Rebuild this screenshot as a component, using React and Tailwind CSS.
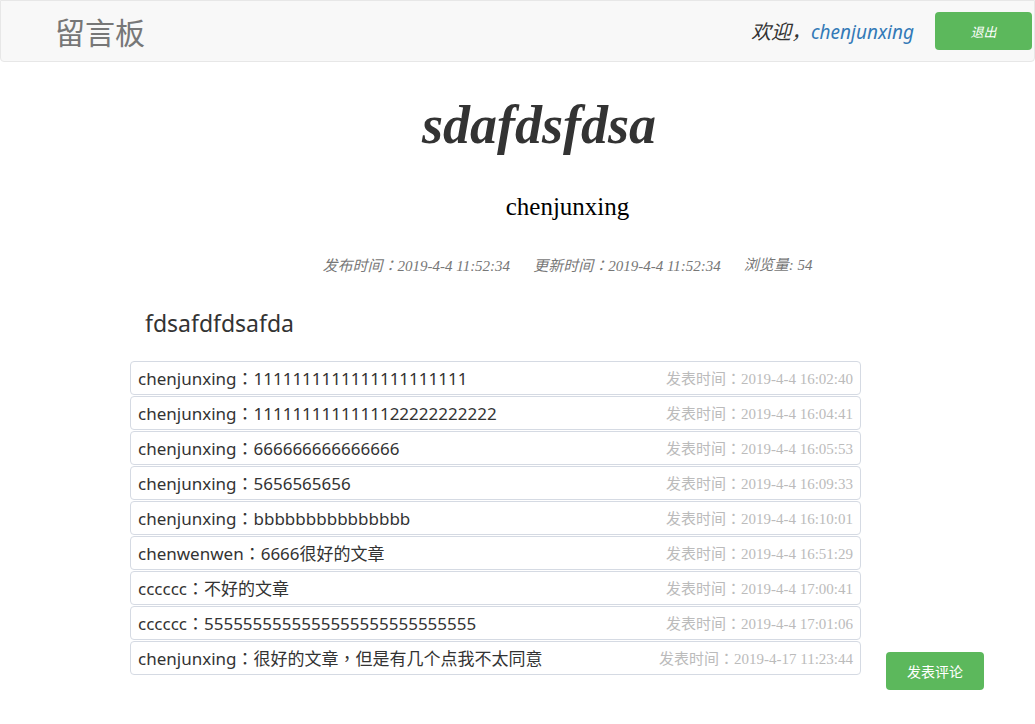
import React from "react";

const comments = [
  { user: "chenjunxing", text: "1111111111111111111111", time: "2019-4-4 16:02:40" },
  { user: "chenjunxing", text: "1111111111111122222222222", time: "2019-4-4 16:04:41" },
  { user: "chenjunxing", text: "666666666666666", time: "2019-4-4 16:05:53" },
  { user: "chenjunxing", text: "5656565656", time: "2019-4-4 16:09:33" },
  { user: "chenjunxing", text: "bbbbbbbbbbbbbbb", time: "2019-4-4 16:10:01" },
  { user: "chenwenwen", text: "6666很好的文章", time: "2019-4-4 16:51:29" },
  { user: "cccccc", text: "不好的文章", time: "2019-4-4 17:00:41" },
  { user: "cccccc", text: "5555555555555555555555555555", time: "2019-4-4 17:01:06" },
  { user: "chenjunxing", text: "很好的文章，但是有几个点我不太同意", time: "2019-4-17 11:23:44" },
];

const sans = "font-['Noto_Sans','Noto_Sans_CJK_SC',sans-serif]";
const serif = "font-['Liberation_Serif','Noto_Sans_CJK_SC',serif]";

// centered full-width colon, like the original's font
function Colon() {
  return <span className="font-['Noto_Sans_CJK_JP',sans-serif]">：</span>;
}

// full-width commas sit centered in the original too
function withCommas(text) {
  return text.split("，").map((part, i) => (
    <React.Fragment key={i}>
      {i > 0 && <span className="font-['Noto_Sans_CJK_TC',sans-serif]">，</span>}
      {part}
    </React.Fragment>
  ));
}

export default function App() {
  return (
    <div className={`min-h-[724px] bg-white ${sans}`}>
      {/* navbar */}
      <div className="h-[62px] flex items-center justify-between bg-[#f8f8f8] border border-[#e7e7e7] rounded-b-[4px]">
        <div className="pl-[54px] pt-[3px] text-[30px] leading-none text-[#777]">留言板</div>
        <div className="flex items-center pr-[2px]">
          <span className="italic text-[20px] text-[#333] pt-[2px]">
            欢迎，<span className="text-[19px] text-[#337ab7]">chenjunxing</span>
          </span>
          <button className="ml-[21px] w-[97px] h-[38px] pt-[3px] rounded-[4px] bg-[#5cb85c] text-white italic text-[13px]">
            退出
          </button>
        </div>
      </div>

      {/* article header */}
      <h1 className={`mt-[36px] pl-[43px] text-center text-[54px] leading-none font-bold italic text-[#333] ${serif}`}>
        sdafdsfdsa
      </h1>
      <div className={`mt-[42px] pl-[100px] text-center text-[25px] leading-none text-black ${serif}`}>
        chenjunxing
      </div>
      <div className={`mt-[39px] h-[14px] pl-[100px] flex items-center justify-center gap-[23px] text-[15px] leading-none italic text-[#777] ${serif}`}>
        <span>发布时间<Colon />2019-4-4 11:52:34</span>
        <span>更新时间<Colon />2019-4-4 11:52:34</span>
        <span>浏览量: 54</span>
      </div>

      <div className="mt-[40px] h-[23px] pl-[145px] text-[23px] leading-none text-[#333]">fdsafdfdsafda</div>

      {/* comments */}
      <div className="mt-[26px] flex pl-[130px]">
        <div className="w-[731px] flex flex-col gap-px">
          {comments.map((c, i) => (
            <div
              key={i}
              className="h-[34px] flex items-center justify-between px-[7px] border border-[#d5dae3] rounded-[4px]"
            >
              <span className="text-[17px] text-[#333] leading-none">
                {c.user}<Colon />{withCommas(c.text)}
              </span>
              <span className={`text-[15px] text-[#bbb] leading-none ${serif}`}>
                <span className="font-['Noto_Sans_CJK_SC',sans-serif]">发表时间<Colon /></span>
                {c.time}
              </span>
            </div>
          ))}
        </div>
        <div className="pl-[25px] pt-[291px]">
          <button className="w-[98px] h-[38px] rounded-[4px] bg-[#5cb85c] text-white text-[14px]">
            发表评论
          </button>
        </div>
      </div>
    </div>
  );
}
